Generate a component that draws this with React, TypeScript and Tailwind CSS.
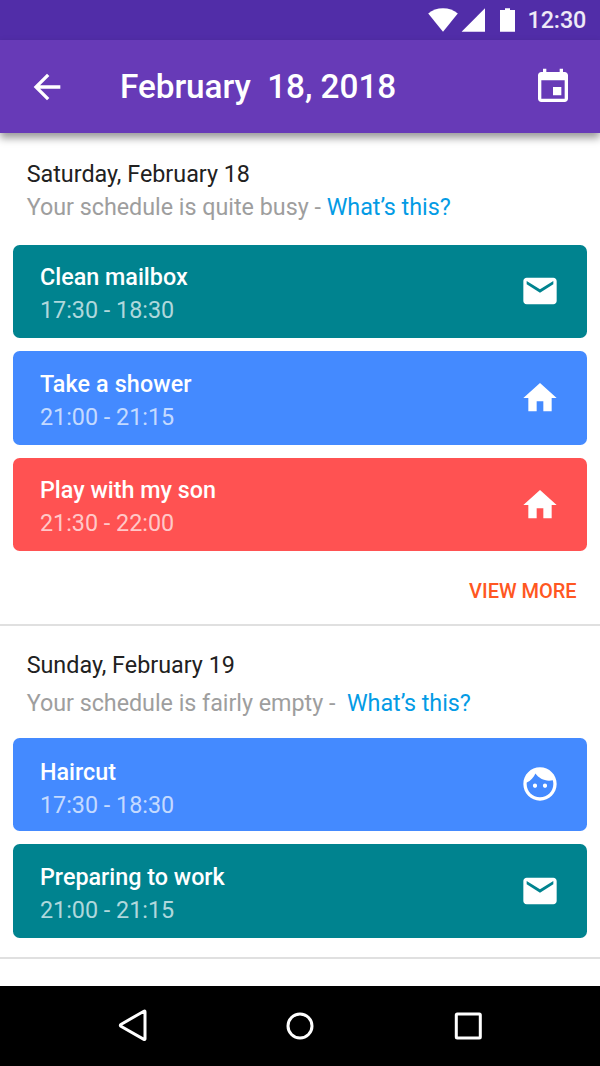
import React from "react";

type IconName = "mail" | "home" | "face";

const paths: Record<IconName | "back" | "event", string> = {
  back: "M20 11H7.83l5.59-5.59L12 4l-8 8 8 8 1.41-1.41L7.83 13H20v-2z",
  event:
    "M17 12h-5v5h5v-5zM16 1v2H8V1H6v2H5c-1.11 0-1.99.9-1.99 2L3 19c0 1.1.89 2 2 2h14c1.1 0 2-.9 2-2V5c0-1.1-.9-2-2-2h-1V1h-2zm3 18H5V8h14v11z",
  mail: "M20 4H4c-1.1 0-1.99.9-1.99 2L2 18c0 1.1.9 2 2 2h16c1.1 0 2-.9 2-2V6c0-1.1-.9-2-2-2zm0 4l-8 5-8-5V6l8 5 8-5v2z",
  home: "M10 20v-6h4v6h5v-8h3L12 3 2 12h3v8z",
  face: "M9 11.75c-.69 0-1.25.56-1.25 1.25s.56 1.25 1.25 1.25 1.25-.56 1.25-1.25-.56-1.25-1.25-1.25zm6 0c-.69 0-1.25.56-1.25 1.25s.56 1.25 1.25 1.25 1.25-.56 1.25-1.25-.56-1.25-1.25-1.25zM12 2C6.48 2 2 6.48 2 12s4.48 10 10 10 10-4.48 10-10S17.52 2 12 2zm0 18c-4.41 0-8-3.59-8-8 0-.29.02-.58.05-.86 2.36-1.05 4.23-2.98 5.21-5.37C11.07 8.33 14.05 10 17.42 10c.78 0 1.53-.09 2.25-.26.21.71.33 1.47.33 2.26 0 4.41-3.59 8-8 8z",
};

function Icon({ name }: { name: keyof typeof paths }) {
  return (
    <svg viewBox="0 0 24 24" className="size-10 shrink-0 fill-white">
      <path d={paths[name]} />
    </svg>
  );
}

interface Task {
  title: string;
  time: string;
  icon: IconName;
  color: string;
  pad: string;
  tracking: string;
}

const saturday: Task[] = [
  { title: "Clean mailbox", time: "17:30 - 18:30", icon: "mail", color: "bg-[#00838f]", pad: "pt-[16.3px]", tracking: "tracking-normal" },
  { title: "Take a shower", time: "21:00 - 21:15", icon: "home", color: "bg-[#448aff]", pad: "pt-[16.3px]", tracking: "tracking-[0.12px]" },
  { title: "Play with my son", time: "21:30 - 22:00", icon: "home", color: "bg-[#ff5252]", pad: "pt-[16px]", tracking: "tracking-normal" },
];

const sunday: Task[] = [
  { title: "Haircut", time: "17:30 - 18:30", icon: "face", color: "bg-[#448aff]", pad: "pt-[18.2px]", tracking: "tracking-normal" },
  { title: "Preparing to work", time: "21:00 - 21:15", icon: "mail", color: "bg-[#00838f]", pad: "pt-[16.5px]", tracking: "tracking-normal" },
];

function TaskList({ tasks }: { tasks: Task[] }) {
  return (
    <ul className="flex flex-col gap-[13.33px] px-[13.33px]">
      {tasks.map((t) => (
        <li
          key={t.title}
          className={`flex h-[93.33px] items-center justify-between rounded-[6.67px] px-[26.67px] ${t.color}`}
        >
          <div className={`self-start text-[23.33px] leading-[33.33px] text-white ${t.pad}`}>
            <h3 className={`font-medium ${t.tracking}`}>{t.title}</h3>
            <p className="text-white/70">{t.time}</p>
          </div>
          <Icon name={t.icon} />
        </li>
      ))}
    </ul>
  );
}

export default function App() {
  return (
    <div className="flex h-[1066px] w-[600px] flex-col overflow-hidden bg-white font-['Roboto',sans-serif] text-[23.33px] leading-[33.33px]">
      <div className="flex h-10 shrink-0 items-center justify-end bg-[#512da8] pr-[13.8px]">
        <svg width="88" height="24" viewBox="0 0 88 24" className="mr-[11.4px] fill-white">
          <path d="M15 23.8 0.2 5.4C4.3 2.1 9.4 0.2 15 0.2s10.7 1.9 14.8 5.2z" />
          <path d="M57 0.3V23.7H33.6z" />
          <path d="M72 2h5V0.3h5V2h5v21.7H72z" />
        </svg>
        <span className="pt-[1.6px] font-medium tracking-[-0.1px] text-white/90">12:30</span>
      </div>

      <header className="z-10 flex h-[93.33px] shrink-0 items-center bg-[#673ab7] px-[26.67px] shadow-[0_5px_8px_rgba(0,0,0,0.4)]">
        <Icon name="back" />
        <h1 className="ml-[53.33px] flex-1 text-[33.33px] font-medium tracking-[-0.06px] whitespace-pre text-white">
          {"February  18, 2018"}
        </h1>
        <Icon name="event" />
      </header>

      <main className="flex-1">
        <section className="h-[492.6px] border-b-2 border-[#e0e0e0] pt-[24.7px]">
          <div className="mb-5 px-[26.67px]">
            <h2 className="text-[#212121]">Saturday, February 18</h2>
            <p className="tracking-[-0.02px] text-[#9e9e9e]">
              Your schedule is quite busy - <a className="text-[#039be5]">What’s this?</a>
            </p>
          </div>
          <TaskList tasks={saturday} />
          <div className="mt-[23.3px] flex justify-end pr-[23.33px]">
            <button className="text-[20px] font-medium text-[#ff5722]">VIEW MORE</button>
          </div>
        </section>

        <section className="h-[333px] border-b-2 border-[#e0e0e0] pt-[22.9px]">
          <div className="mb-[17.4px] px-[26.67px]">
            <h2 className="mb-[4.7px] text-[#212121]">Sunday, February 19</h2>
            <p className="tracking-[-0.03px] whitespace-pre text-[#9e9e9e]">
              {"Your schedule is fairly empty -  "}
              <a className="text-[#039be5]">What’s this?</a>
            </p>
          </div>
          <TaskList tasks={sunday} />
        </section>
      </main>

      <nav className="flex h-20 shrink-0 items-center justify-center gap-32 bg-black">
        <svg width="40" height="40" viewBox="0 0 40 40" className="fill-none stroke-white stroke-3">
          <path d="M24.2 5.2Q25.3 4.6 25.3 5.8V32.8Q25.3 34 24.2 33.4L1.2 20.2Q0 19.3 1.2 18.4Z" transform="translate(7.7 0)" />
        </svg>
        <svg width="40" height="40" viewBox="0 0 40 40" className="fill-none stroke-white stroke-3">
          <circle cx="20" cy="20" r="12" />
        </svg>
        <svg width="40" height="40" viewBox="0 0 40 40" className="fill-none stroke-white stroke-3">
          <rect x="8.3" y="8" width="24" height="24" rx="1" />
        </svg>
      </nav>
    </div>
  );
}
